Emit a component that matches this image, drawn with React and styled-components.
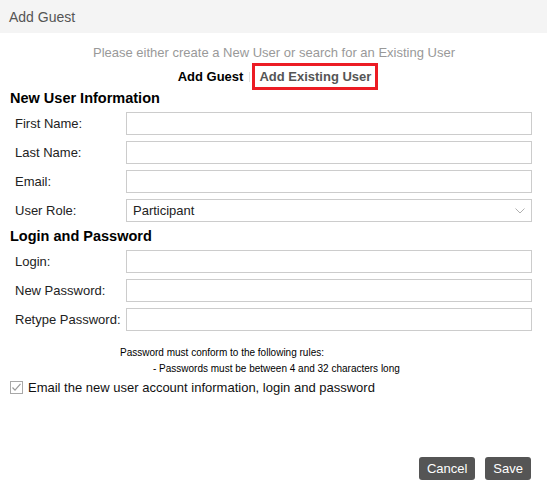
import React from 'react';
import styled, { createGlobalStyle } from 'styled-components';

const GlobalStyle = createGlobalStyle`
  html, body {
    margin: 0;
    padding: 0;
    background: #ffffff;
    font-family: "Liberation Sans", Arial, sans-serif;
  }
`;

const Dialog = styled.div`
  width: 547px;
  height: 497px;
  display: flex;
  flex-direction: column;
  background: #ffffff;
  box-sizing: border-box;
`;

const Header = styled.div`
  height: 33px;
  flex: none;
  background: #f4f4f4;
  color: #555555;
  font-size: 14px;
  display: flex;
  align-items: center;
  padding-left: 9px;
`;

const Body = styled.div`
  flex: 1;
  display: flex;
  flex-direction: column;
  padding: 0 15px 17px 10px;
`;

const Intro = styled.div`
  margin-top: 12px;
  text-align: center;
  color: #999999;
  font-size: 13px;
  line-height: 15px;
  padding-left: 6px;
`;

const Tabs = styled.div`
  margin-top: 3px;
  display: flex;
  justify-content: center;
  align-items: center;
  padding-left: 8px;
`;

const Tab = styled.div`
  font-size: 13px;
  font-weight: bold;
  line-height: 15px;
  color: ${p => (p.$active ? '#000000' : '#555555')};
  padding: ${p => (p.$highlight ? '3px 4px' : '6px 6px')};
  border: ${p => (p.$highlight ? '3px solid #ec1c24' : 'none')};
`;

const Divider = styled.span`
  width: 1px;
  height: 10px;
  background: #e2e2e2;
  margin-right: 2px;
`;

const SectionTitle = styled.div`
  font-size: 14.5px;
  font-weight: bold;
  line-height: 16px;
  color: #000000;
  margin-top: ${p => p.$top || '0'};
`;

const Rows = styled.div`
  display: grid;
  grid-template-columns: 116px 1fr;
  row-gap: 6px;
  margin-top: 6px;
`;

const Label = styled.label`
  font-size: 13px;
  color: #222222;
  padding-left: 5px;
  display: flex;
  align-items: center;
  height: 23px;
`;

const Input = styled.input`
  box-sizing: border-box;
  height: 23px;
  width: 406px;
  border: 1px solid #cccccc;
  background: #ffffff;
  margin: 0;
  padding: 0 6px;
  font-family: inherit;
  font-size: 13px;
  outline: none;
`;

const SelectBox = styled.div`
  box-sizing: border-box;
  height: 23px;
  width: 406px;
  border: 1px solid #cccccc;
  display: flex;
  align-items: center;
  justify-content: space-between;
  padding: 0 6px 0 6px;
  font-size: 13px;
  color: #222222;
`;

const Rules = styled.div`
  margin: 14px 0 0 110px;
  font-size: 10px;
  line-height: 16px;
  color: #000000;
`;

const RuleItem = styled.div`
  padding-left: 33px;
`;

const CheckRow = styled.label`
  margin-top: 3px;
  display: flex;
  align-items: center;
  gap: 5px;
  font-size: 13px;
  color: #111111;
  line-height: 15px;
`;

const Footer = styled.div`
  margin-top: auto;
  display: flex;
  justify-content: flex-end;
  gap: 10px;
  padding-right: 1px;
`;

const Button = styled.button`
  height: 23px;
  padding: 0 8px;
  border: none;
  border-radius: 3px;
  background: #555555;
  color: #ffffff;
  font-family: inherit;
  font-size: 13px;
  margin: 0;
`;

const Checkbox = () => (
  <svg width="13" height="13" viewBox="0 0 13 13">
    <rect x="0.5" y="0.5" width="12" height="12" fill="#ffffff" stroke="#a8a8a8" />
    <path d="M2.5 6.5 L5 9.2 L10.5 2.8" fill="none" stroke="#9a9a9a" strokeWidth="1.2" />
  </svg>
);

const Chevron = () => (
  <svg width="10" height="6" viewBox="0 0 10 6">
    <path d="M0.5 0.5 L5 5 L9.5 0.5" fill="none" stroke="#b0b0b0" strokeWidth="1" />
  </svg>
);

const Field = ({ label }) => (
  <>
    <Label>{label}</Label>
    <Input type="text" />
  </>
);

export default function App() {
  return (
    <Dialog>
      <GlobalStyle />
      <Header>Add Guest</Header>
      <Body>
        <Intro>Please either create a New User or search for an Existing User</Intro>
        <Tabs>
          <Tab $active>Add Guest</Tab>
          <Divider />
          <Tab $highlight>Add Existing User</Tab>
        </Tabs>
        <SectionTitle>New User Information</SectionTitle>
        <Rows>
          <Field label="First Name:" />
          <Field label="Last Name:" />
          <Field label="Email:" />
          <Label>User Role:</Label>
          <SelectBox>
            <span>Participant</span>
            <Chevron />
          </SelectBox>
        </Rows>
        <SectionTitle $top="6px">Login and Password</SectionTitle>
        <Rows>
          <Field label="Login:" />
          <Field label="New Password:" />
          <Field label="Retype Password:" />
        </Rows>
        <Rules>
          Password must conform to the following rules:
          <RuleItem>- Passwords must be between 4 and 32 characters long</RuleItem>
        </Rules>
        <CheckRow>
          <Checkbox />
          Email the new user account information, login and password
        </CheckRow>
        <Footer>
          <Button>Cancel</Button>
          <Button>Save</Button>
        </Footer>
      </Body>
    </Dialog>
  );
}
